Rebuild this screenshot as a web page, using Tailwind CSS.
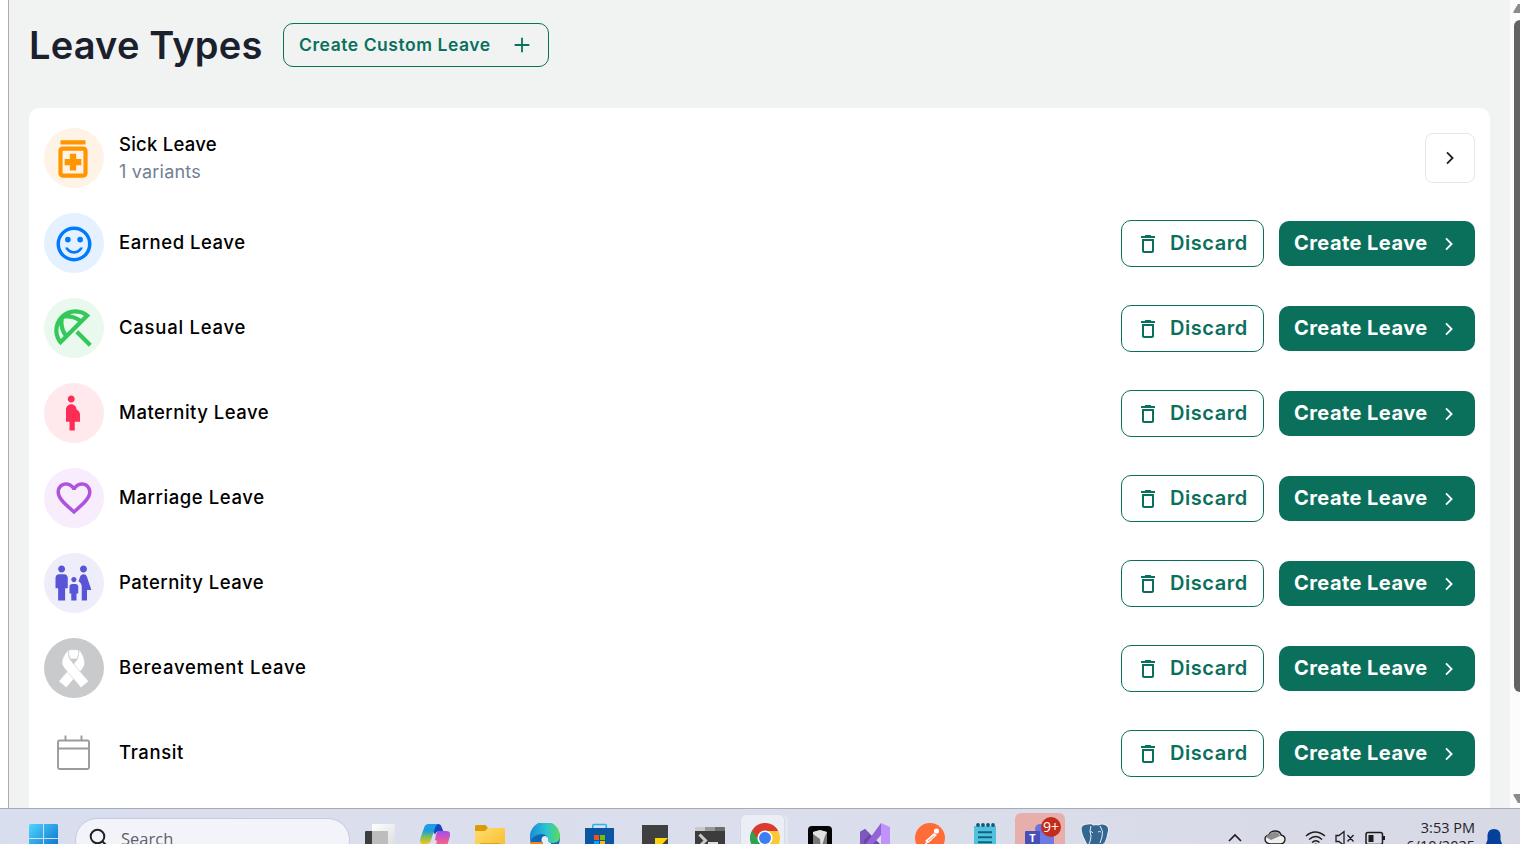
<!DOCTYPE html>
<html lang="en">
<head>
<meta charset="utf-8">
<title>Leave Types</title>
<script src="https://cdn.jsdelivr.net/npm/@tailwindcss/browser@4"></script>
</head>
<body class="h-[844px] w-[1520px] overflow-hidden bg-white font-['Inter',sans-serif] text-black">
<svg class="hidden">
  <symbol id="trash" viewBox="0 0 24 24"><path fill="currentColor" d="M6 19c0 1.1.9 2 2 2h8c1.1 0 2-.9 2-2V7H6v12zM8 9h8v10H8V9zm7.5-5l-1-1h-5l-1 1H5v2h14V4z"/></symbol>
  <symbol id="chev" viewBox="0 0 24 24"><path fill="none" stroke="currentColor" stroke-width="1.8" d="M9 6.3l5.6 5.7L9 17.7"/></symbol>
</svg>
<template id="actions">
  <button class="mr-[15px] flex h-[47px] w-[143px] items-center gap-[10px] rounded-[10px] border border-[#0a705c] pl-[14px] text-xl font-semibold tracking-[0.55px] text-[#0a705c]"><svg class="mt-[2px] size-6"><use href="#trash"/></svg>Discard</button>
  <button class="flex h-[45px] w-[196px] items-center justify-between rounded-[10px] bg-[#0a705c] pl-[15px] pr-[14px] text-xl font-bold tracking-[0.45px] text-white">Create Leave<svg class="mt-px size-6"><use href="#chev"/></svg></button>
</template>
<div class="flex h-full flex-col">
  <div class="flex h-[808px] shrink-0 overflow-hidden">
    <div class="w-[9px] shrink-0 border-r border-[#adadad] bg-white"></div>
    <main class="flex w-[1501px] shrink-0 flex-col bg-[#f1f3f3] px-5">
      <header class="mt-[23px] flex h-11 shrink-0 items-center gap-[21px]">
        <h1 class="w-[233px] whitespace-nowrap text-[38px] font-semibold leading-none tracking-[0.2px] text-[#1a202c]">Leave Types</h1>
        <button class="flex h-11 w-[266px] items-center justify-between rounded-[10px] border border-[#0a705c] pl-[15px] pr-[14px] text-[#0a705c]">
          <span class="whitespace-nowrap text-[17.5px] font-semibold tracking-[0.55px]">Create Custom Leave</span>
          <svg class="size-6" viewBox="0 0 24 24" fill="none" stroke="currentColor" stroke-width="1.8"><path d="M12 4.7v14.6M4.700 12h14.600"/></svg>
        </button>
      </header>
      <section class="mt-[41px] flex w-[1461px] shrink-0 flex-col gap-[25px] rounded-t-[10px] bg-white px-[15px] pb-10 pt-5">
        <div class="flex h-[60px] items-center">
          <div class="grid size-[60px] place-items-center rounded-full bg-[#fff3e5]"><svg class="mr-[2px] mt-px size-[50px]" viewBox="0 0 24 24" fill="#ff9500"><path d="M6 3h12v2H6zM17 6H7c-1.100 0-2 .9-2 2v11c0 1.100.9 2 2 2h10c1.100 0 2-.9 2-2V8c0-1.100-.9-2-2-2zm0 13H7V8h10v11zM10.500 9.500h3v2.500H16v3h-2.500v2.500h-3v-2.500H8v-3h2.500z"/></svg></div>
          <div class="ml-[15px] flex flex-1 flex-col"><span class="text-[18.5px] font-medium leading-[27px] tracking-[0.25px]">Sick Leave</span><span class="text-[18px] leading-[27px] tracking-[0.2px] text-[#718096]">1 variants</span></div>
          <button class="grid size-[50px] place-items-center rounded-lg border border-[#e2e8f0] text-[#1a202c]"><svg class="size-6"><use href="#chev"/></svg></button>
        </div>
        <div class="flex h-[60px] items-center" data-actions>
          <div class="grid size-[60px] place-items-center rounded-full bg-[#e5f1ff]"><svg class="mr-px mt-px size-[42px]" viewBox="0 0 24 24" fill="#007aff"><circle cx="15.500" cy="9.500" r="1.600"/><circle cx="8.500" cy="9.500" r="1.600"/><path d="M12 16c-1.480 0-2.750-.81-3.450-2H6.880c.8 2.050 2.790 3.500 5.120 3.500s4.320-1.450 5.120-3.500h-1.670c-.7 1.190-1.970 2-3.450 2z"/><circle cx="12" cy="12" r="9" fill="none" stroke="#007aff" stroke-width="2"/></svg></div>
          <span class="ml-[15px] flex-1 text-[18.5px] font-medium tracking-[0.52px]">Earned Leave</span>
        </div>
        <div class="flex h-[60px] items-center" data-actions>
          <div class="grid size-[60px] place-items-center rounded-full bg-[#e9f9ee]"><svg class="mr-[2px] size-[50px]" viewBox="0 0 24 24" fill="#34c759"><path d="M21 19.570l-1.427 1.428-6.442-6.442 1.430-1.428zM13.120 3c-2.580 0-5.160.98-7.140 2.950l-.01.01c-3.950 3.950-3.950 10.360 0 14.310l14.300-14.310C18.300 3.990 15.710 3 13.120 3zM6.140 17.270C5.400 16.030 5 14.610 5 13.120c0-.93.16-1.820.46-2.670.19 1.910.89 3.790 2.070 5.440l-1.390 1.380zm2.840-2.840C7.630 12.380 7.120 9.930 7.600 7.600c.58-.12 1.160-.18 1.750-.18 1.800 0 3.550.55 5.080 1.560l-5.450 5.450zm1.470-8.970c.85-.3 1.740-.46 2.670-.46 1.490 0 2.910.4 4.150 1.140l-1.390 1.390c-1.650-1.180-3.520-1.880-5.430-2.070z"/></svg></div>
          <span class="ml-[15px] flex-1 text-[18.5px] font-medium tracking-[0.75px]">Casual Leave</span>
        </div>
        <div class="flex h-[60px] items-center" data-actions>
          <div class="grid size-[60px] place-items-center rounded-full bg-[#ffe9ed]"><svg class="mr-[2px] size-[42px]" viewBox="0 0 24 24" fill="#ff2d55"><path d="M9 4c0-1.110.89-2 2-2s2 .89 2 2-.89 2-2 2-2-.89-2-2zm7 9c-.01-1.340-.83-2.510-2-3 0-1.660-1.340-3-3-3s-3 1.340-3 3v7h2v5h3v-5h3v-4z"/></svg></div>
          <span class="ml-[15px] flex-1 text-[18.5px] font-medium tracking-[0.5px]">Maternity Leave</span>
        </div>
        <div class="flex h-[60px] items-center" data-actions>
          <div class="grid size-[60px] place-items-center rounded-full bg-[#f7edfc]"><svg class="mr-px size-[42px]" viewBox="0 0 24 24" fill="#af52de"><path d="M16.500 3c-1.740 0-3.410.81-4.500 2.090C10.910 3.810 9.240 3 7.500 3 4.420 3 2 5.420 2 8.500c0 3.780 3.400 6.860 8.550 11.540L12 21.350l1.450-1.320C18.600 15.360 22 12.280 22 8.500 22 5.420 19.580 3 16.500 3zm-4.400 15.550l-.1.1-.1-.1C7.140 14.240 4 11.390 4 8.500 4 6.500 5.500 5 7.500 5c1.540 0 3.040.99 3.570 2.360h1.870C13.460 5.990 14.960 5 16.500 5c2 0 3.500 1.500 3.500 3.500 0 2.890-3.140 5.740-7.900 10.050z"/></svg></div>
          <span class="ml-[15px] flex-1 text-[18.5px] font-medium tracking-[0.58px]">Marriage Leave</span>
        </div>
        <div class="flex h-[60px] items-center" data-actions>
          <div class="grid size-[60px] place-items-center rounded-full bg-[#eeeefa]"><svg class="mr-[2px] size-[42px]" viewBox="0 0 24 24" fill="#5856d6"><path d="M16 4c0-1.110.89-2 2-2s2 .89 2 2-.89 2-2 2-2-.89-2-2zm4 18v-6h2.500l-2.540-7.630A2.010 2.010 0 0 0 18.060 7h-.12c-.86 0-1.630.55-1.900 1.370l-.86 2.580c1.080.6 1.820 1.730 1.820 3.050v8h3zm-7.500-10.500c.83 0 1.500-.67 1.500-1.500s-.67-1.500-1.500-1.500S11 9.170 11 10s.67 1.500 1.500 1.500zM5.500 6c1.110 0 2-.89 2-2s-.89-2-2-2-2 .89-2 2 .89 2 2 2zm2 16v-7H9V9c0-1.100-.9-2-2-2H4c-1.100 0-2 .9-2 2v6h1.500v7h4zm6.500 0v-4h1v-4c0-.82-.68-1.500-1.500-1.500h-2c-.82 0-1.500.68-1.500 1.500v4h1v4h3z"/></svg></div>
          <span class="ml-[15px] flex-1 text-[18.5px] font-medium tracking-[0.5px]">Paternity Leave</span>
        </div>
        <div class="flex h-[60px] items-center" data-actions>
          <div class="grid size-[60px] place-items-center rounded-full bg-[#c9cacb]"><svg class="size-[60px]" viewBox="42 84 180 180"><g stroke="#c9cacb" stroke-width="1.800" fill="#fff"><path d="M117 119h28l2 12-6 16h-20l-6-16z"/><path d="M147 119c9 10 17 26 17 38 0 8-2 13-7 20l-48 56-23-19 42-48 13-17c3-9 7-18 5-32z"/><path d="M116 119c-10 9-20 26-20 38 0 8 3 13 9 20l48 56 23-19-42-48-13-17c-5-9-8-18-5-30z"/></g></svg></div>
          <span class="ml-[15px] flex-1 text-[18.5px] font-medium tracking-[0.76px]">Bereavement Leave</span>
        </div>
        <div class="flex h-[60px] items-center" data-actions>
          <svg class="size-[60px]" viewBox="0 0 60 60" fill="none" stroke="#9b9b9b" stroke-width="1.900"><rect x="14" y="17.500" width="31" height="28.500" rx="1.500"/><path d="M14 25.500h31M21.500 17.500V12.500M37.500 17.500V12.500"/></svg>
          <span class="ml-[15px] flex-1 text-[18.5px] font-medium tracking-[0.6px]">Transit</span>
        </div>
      </section>
    </main>
    <!-- scrollbar, partly beyond the right edge -->
    <div class="flex w-[10px] shrink-0 flex-col overflow-hidden bg-[#fcfcfc] pl-1">
      <svg class="-ml-1 mt-[3px] h-[10px] w-3 shrink-0 self-start overflow-visible" viewBox="0 0 12 10" fill="#8b8b8b"><path d="M3.500 8.500L8 1h6v9H4.500Q3 10 3.500 8.500z"/></svg>
      <div class="mt-[7px] h-[672px] w-3 shrink-0 rounded-md bg-[#636363]"></div>
      <svg class="-ml-1 mt-[102px] h-[10px] w-3 shrink-0 overflow-visible" viewBox="0 0 12 10" fill="#8b8b8b"><path d="M3.500 1.500L8 9h6V0H4.500Q3 0 3.500 1.500z"/></svg>
    </div>
  </div>
  <footer class="flex h-[36px] shrink-0 items-start overflow-hidden border-t border-[#a9aab5] bg-gradient-to-r from-[#d9deee] via-[#dbdeec] to-[#d7d9e5] font-['Open_Sans',sans-serif]">
    <svg class="ml-[29px] mt-[15px] h-[29px] w-[29px] shrink-0" viewBox="0 0 29 29"><defs><linearGradient id="w" x2="1" y2="1"><stop stop-color="#50d5ff"/><stop offset="1" stop-color="#0067c8"/></linearGradient></defs><path fill="url(#w)" d="M1 0h13v14H0V1zM15 0h13l1 1v13H15zM0 15h14v14H0zM15 15h14v14H15z"/></svg>
    <div class="ml-[17px] mt-[9px] flex h-11 w-[275px] shrink-0 rounded-full border border-[#c6cbdc] bg-[#f3f4fa] pl-[13px]">
      <svg class="mt-2 size-5 shrink-0" viewBox="0 0 20 20" fill="none" stroke="#222" stroke-width="2"><circle cx="8.500" cy="9.500" r="6.800"/><path d="M13.500 14.500l4.500 4.500"/></svg>
      <span class="ml-[12px] mt-[8px] text-[16.5px] leading-6 text-[#5d6068]">Search</span>
    </div>
    <div class="ml-[2px] grid w-[770px] shrink-0 grid-cols-[repeat(14,55px)]">
      <svg class="ml-[13px] mt-[14px] size-[30px]" viewBox="0 0 30 30"><defs><linearGradient id="tv" x2="1" y2="1"><stop stop-color="#fff"/><stop offset="1" stop-color="#ddd"/></linearGradient></defs><rect y="8" width="23" height="20" rx="1" fill="#3d3d3d"/><rect x="7" y="1" width="23" height="22" rx="1" fill="url(#tv)"/><path d="M7 8h15a1 1 0 0 1 1 1v14H7z" fill="#bdbdbd"/></svg>
      <svg class="ml-[13px] mt-[14px] size-[30px]" viewBox="0 0 30 30"><defs><linearGradient id="c1" x2="0" y2="1"><stop stop-color="#1d9cf0"/><stop offset=".35" stop-color="#18a0d8"/><stop offset=".65" stop-color="#7fbf5a"/><stop offset="1" stop-color="#f5c518"/></linearGradient><linearGradient id="c2" x2="0" y2="1"><stop stop-color="#a04df0"/><stop offset=".5" stop-color="#ee5c96"/><stop offset="1" stop-color="#ff8a4c"/></linearGradient></defs><path d="M13 1h5q3 0 4 4l1.500 3.500H18q-2 0-3 3l-2-3z" fill="#1748c0"/><path d="M8.500 1H18q-2 1-3 4l-4 12q-1 4-5 4H3q-4 0-2.500-6L4 5q1-4 4.500-4z" fill="url(#c1)"/><path d="M18.500 8H26q5 0 4 5l-3 10q-2 6-6 6h-9q2-1 3-4l2-7-2-1 1-5q1-4 2.500-4z" fill="url(#c2)"/></svg>
      <svg class="ml-[13px] mt-[14px] size-[30px]" viewBox="0 0 30 30"><defs><linearGradient id="f" x2="1" y2="1"><stop stop-color="#ffdd6e"/><stop offset="1" stop-color="#f8ba2a"/></linearGradient></defs><path d="M0 3.500q0-1.500 1.500-1.500h9l2.500 3-3 4H0z" fill="#dc9a08"/><path d="M0 8h10l3-3h16q1 0 1 1v22H0z" fill="url(#f)"/><path d="M5 21q0-1 2-1h16q2 0 2 1v7H5z" fill="#d9a31b"/></svg>
      <svg class="ml-[13px] mt-[14px] size-[30px]" viewBox="0 0 30 30"><defs><linearGradient id="e"><stop stop-color="#1b8bd8"/><stop offset=".55" stop-color="#2bc3d2"/><stop offset="1" stop-color="#5edb58"/></linearGradient></defs><circle cx="15" cy="15" r="15" fill="#0f66b8"/><path d="M0 14A15 15 0 0 1 30 13q0 7-7 7-5 0-5-3 0-5-6-6-7 0-12 7z" fill="url(#e)"/><path d="M11.500 17q0-4 4-4 3 1 2.500 3.500 0 3 3 3.500v5q-9-1-9.500-8z" fill="#e9effa"/><path d="M0 19h13v11H0z" fill="#e98b1c"/></svg>
      <svg class="ml-[13px] mt-[14px] size-[30px]" viewBox="0 0 30 30"><path d="M7.800 6V2.500q0-1 1-1h11.500q1 0 1 1V6" fill="none" stroke="#28b5ec" stroke-width="1.600"/><path d="M0 5h29v24H0z" fill="#0b56a0"/><path d="M9 12h5v5H9z" fill="#f25022"/><path d="M15 12h5v5h-5z" fill="#7fba00"/><path d="M9 18h5v5H9z" fill="#00a4ef"/><path d="M15 18h5v5h-5z" fill="#ffb900"/></svg>
      <svg class="ml-[13px] mt-[14px] size-[30px]" viewBox="0 0 30 30"><path d="M2 2h26v28H2z" fill="#404040"/><path d="M15 15h13l-13 14z" fill="#fcd40a"/></svg>
      <svg class="ml-[13px] mt-[14px] size-[30px]" viewBox="0 0 30 30"><path d="M0 8h30v22H0z" fill="#3c3c3c"/><path d="M0 4.500q0-.5 1-.5h9v4H0z" fill="#c9c9c9"/><path d="M10 4h10v4H10z" fill="#989898"/><path d="M20 4h9q1 0 1 1v3H20z" fill="#6c6c6c"/><path d="M4.500 11.500l6 6-6 6" fill="none" stroke="#ccc" stroke-width="3"/><path d="M13 19h10v2H13z" fill="#ddd"/></svg>
      <div class="relative h-[36px]">
        <div class="absolute left-[8px] top-[5px] h-12 w-[44px] rounded-md border border-[#dcdfe9] bg-[#e3e6f1]"></div>
        <div class="absolute left-[3px] top-[5px] h-12 w-[45px] rounded-md border border-[#d6d9e6] bg-[#eceef6]"></div>
        <svg class="absolute left-[13px] top-[14px] size-[30px]" viewBox="0 0 30 30"><path d="M15 15V30A15 15 0 0 1 2 7.500z" fill="#2da350"/><path d="M15 8H28.300A15 15 0 0 1 15 30z" fill="#fcc934"/><path d="M2 7.500A15 15 0 0 1 28.300 8H15v7l-6 3z" fill="#db3a2f"/><circle cx="15" cy="15" r="7.600" fill="#fff"/><circle cx="15" cy="15" r="6" fill="#3c7ff0"/></svg>
      </div>
      <svg class="ml-[13px] mt-[14px] size-[30px]" viewBox="0 0 30 30"><rect x="3" y="3" width="24" height="27" rx="4" fill="#050505"/><path d="M8 9l7-2 7 2v12l-7 6-7-6z" fill="#777"/><path d="M8 9l7-2 7 2-2 4-4 13-1-10-7-5z" fill="#e2e2e2"/></svg>
      <svg class="ml-[13px] mt-[14px] size-[30px]" viewBox="0 0 30 30"><path d="M0 9l5-3 17 17v7L5 21 0 24z" fill="#6b47a6"/><path d="M0 9l5-3 5 5-6 6v6l-4-2z" fill="#7d58bd"/><path d="M5 22L21 0v12L9 26z" fill="#9263d6"/><path d="M21 0l9 4v26l-9-2z" fill="#c292fb"/></svg>
      <svg class="ml-[13px] mt-[14px] size-[30px]" viewBox="0 0 30 30"><circle cx="15" cy="15" r="15" fill="#ff6c37"/><path d="M7 24l8-9 2 2z" fill="#fff"/><path d="M10 18l9-8 3 2-9 8z" fill="#fff"/><circle cx="21.500" cy="8" r="2.600" fill="#fff"/><path d="M13 18l6-5" stroke="#ff6c37" stroke-width=".8"/></svg>
      <svg class="ml-[13px] mt-[14px] size-[30px]" viewBox="0 0 30 30"><path d="M4 3h22v27H4z" fill="#50c2dd"/><path d="M8 9.200h14M8 14.200h14M8 19.200h14" stroke="#0b6583" stroke-width="2"/><g fill="#0b5a78"><circle cx="8" cy="2" r="1.900"/><circle cx="13" cy="2" r="1.900"/><circle cx="18" cy="2" r="1.900"/><circle cx="23" cy="2" r="1.900"/></g></svg>
      <div class="relative h-[36px]">
        <div class="absolute left-[3px] top-[4px] h-12 w-[50px] rounded-md bg-[#e8aeab]"></div>
        <svg class="absolute left-[13px] top-[14px] size-[30px]" viewBox="0 0 30 30"><circle cx="15" cy="6" r="5" fill="#6a74dc"/><path d="M10 10h19v20H10z" fill="#6e79e3"/><rect y="8" width="15" height="15" rx="1" fill="#4650b8"/></svg>
        <span class="absolute left-[13px] top-[23px] w-[15px] text-center text-[11px] font-bold leading-none text-white">T</span>
        <div class="absolute left-[29px] top-[8px] flex h-5 w-5 items-center justify-center rounded-full bg-[#c42b1c] pb-px text-[14px] leading-none text-white">9+</div>
      </div>
      <svg class="ml-[13px] mt-[14px] size-[30px]" viewBox="0 0 30 30"><path d="M8 1q3-1 6 1 2-1 4 0 4-2 8 0 4 2 2 8-1 6-3 10l-4 3-2 7h-6l-1-8q-3 3-6-2Q1 11 1 5q1-4 7-4z" fill="#336791" stroke="#e8edf4" stroke-width="1.100"/><path d="M11 3q-2 5 0 10 0 4-2 8M20 3q4 5 2 11l-2 6M10 9q2-1 3 1M18 9q2-1 3 0" fill="none" stroke="#e8edf4" stroke-width="1"/></svg>
    </div>
    <svg class="ml-[105px] mt-[18px] h-[26px] w-[159px] shrink-0" viewBox="0 0 159 26" fill="none" stroke="#1c1c1c" stroke-width="1.600"><path d="M2 14l6-6 6 6"/><g transform="translate(1 0)"><path d="M42 17q-5-1-5-5 0-3 4-4 1-4 6-4 5 0 6 4 4 1 4 4 0 4-4 5z" fill="#eee" stroke-width="1.300"/><path d="M38 10q1-2 3-2 1-3 6-3 4 0 5 4l-9 4z" fill="#8d8d8d" stroke="none"/><g stroke-width="1.400"><path d="M78 9q9-8 19 0M81 12.500q7-6 13 0M84 15.500q4-3.500 7.500 0"/></g><circle cx="87.700" cy="18" r="1.600" fill="#1c1c1c" stroke="none"/><path d="M108 8.500h3l5-4v14l-5-4h-3zM119.500 8l6 6.500M125.500 8l-6 6.500" stroke-width="1.300"/><rect x="138" y="5.500" width="16.500" height="12" rx="2" stroke-width="1.500"/><path d="M140.500 8h5v7h-5z" fill="#1c1c1c" stroke="none"/><path d="M156 9v4" stroke-width="2"/></g></svg>
    <div class="ml-[11px] mt-[9px] flex w-[78px] shrink-0 flex-col items-end whitespace-nowrap text-[14.5px] leading-5 text-[#222]"><span>3:53 PM</span><span class="-mt-[2px]">6/10/2025</span></div>
    <svg class="ml-[9px] mt-[19px] h-[22px] w-5 shrink-0" viewBox="0 0 20 22" fill="#03419b"><path d="M10 1q6 0 6.500 6v5l2 5v2h-17v-2l2-5V7Q4 1 10 1z"/></svg>
  </footer>
</div>
<script>
  const actions = document.getElementById("actions");
  document.querySelectorAll("[data-actions]").forEach(row => row.appendChild(actions.content.cloneNode(true)));
</script>
</body>
</html>
